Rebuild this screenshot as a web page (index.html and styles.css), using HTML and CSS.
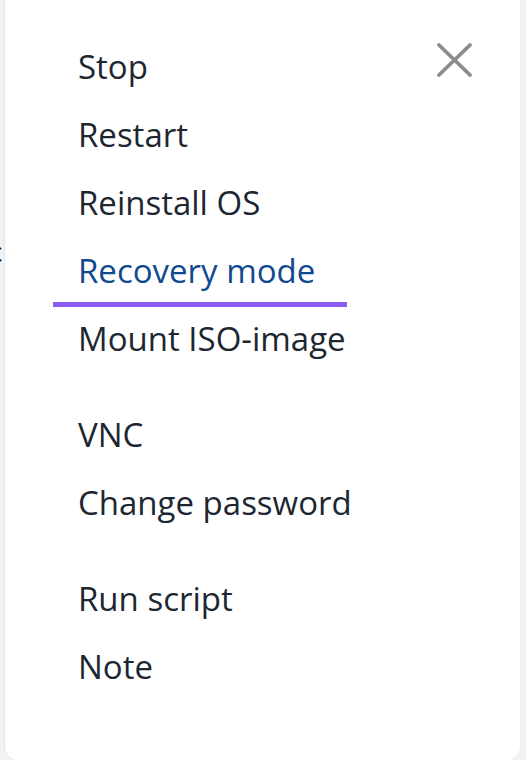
FILE: index.html
```html
<!DOCTYPE html>
<html lang="en">
<head>
<meta charset="utf-8">
<title>Server actions</title>
<link rel="stylesheet" href="styles.css">
</head>
<body>
<div class="page">
  <span class="peek">ε</span>
  <aside class="panel">
    <button class="close" aria-label="Close">
      <svg width="38" height="36" viewBox="0 0 38 36"><path d="M4 3 L35 33 M35 3 L4 33" stroke="#8a8d90" stroke-width="3.8" stroke-linecap="round" fill="none"/></svg>
    </button>
    <nav class="menu">
      <ul class="group">
        <li class="item">Stop</li>
        <li class="item">Restart</li>
        <li class="item">Reinstall OS</li>
        <li class="item active">Recovery mode</li>
        <li class="item">Mount ISO-image</li>
      </ul>
      <ul class="group">
        <li class="item">VNC</li>
        <li class="item">Change password</li>
      </ul>
      <ul class="group">
        <li class="item">Run script</li>
        <li class="item">Note</li>
      </ul>
    </nav>
  </aside>
</div>
</body>
</html>
```

FILE: styles.css
```css
html, body {
  margin: 0;
  padding: 0;
  height: 100%;
}
body {
  background: #f0f2f3;
  font-family: "Open Sans", "Noto Sans", sans-serif;
  overflow: hidden;
}
.page {
  position: relative;
  height: 760px;
  padding-left: 4px;
  padding-right: 6px;
}
.peek {
  position: absolute;
  left: -11px;
  top: 236px;
  font-size: 28px;
  line-height: 30px;
  color: #10171e;
}
.panel {
  position: relative;
  height: 760px;
  background: #ffffff;
  border-left: 1px solid #e4e7e9;
  border-radius: 0 0 14px 14px;
  box-sizing: border-box;
}
.close {
  position: absolute;
  left: 430px;
  top: 42px;
  width: 38px;
  height: 36px;
  padding: 0;
  border: 0;
  background: none;
  cursor: pointer;
}
.menu {
  padding-top: 33px;
  padding-left: 48px;
}
.group {
  list-style: none;
  margin: 0;
  padding: 0;
}
.group + .group {
  margin-top: 28px;
}
.item {
  height: 68px;
  line-height: 68px;
  padding-left: 25px;
  font-size: 33px;
  color: #1d2731;
  width: fit-content;
  box-sizing: border-box;
}
.item.active {
  color: #104a8e;
  height: 70px;
  padding-right: 32px;
  padding-bottom: 2px;
  margin-bottom: -2px;
  box-shadow: inset 0 -5px 0 #8b5cf6;
}
```
